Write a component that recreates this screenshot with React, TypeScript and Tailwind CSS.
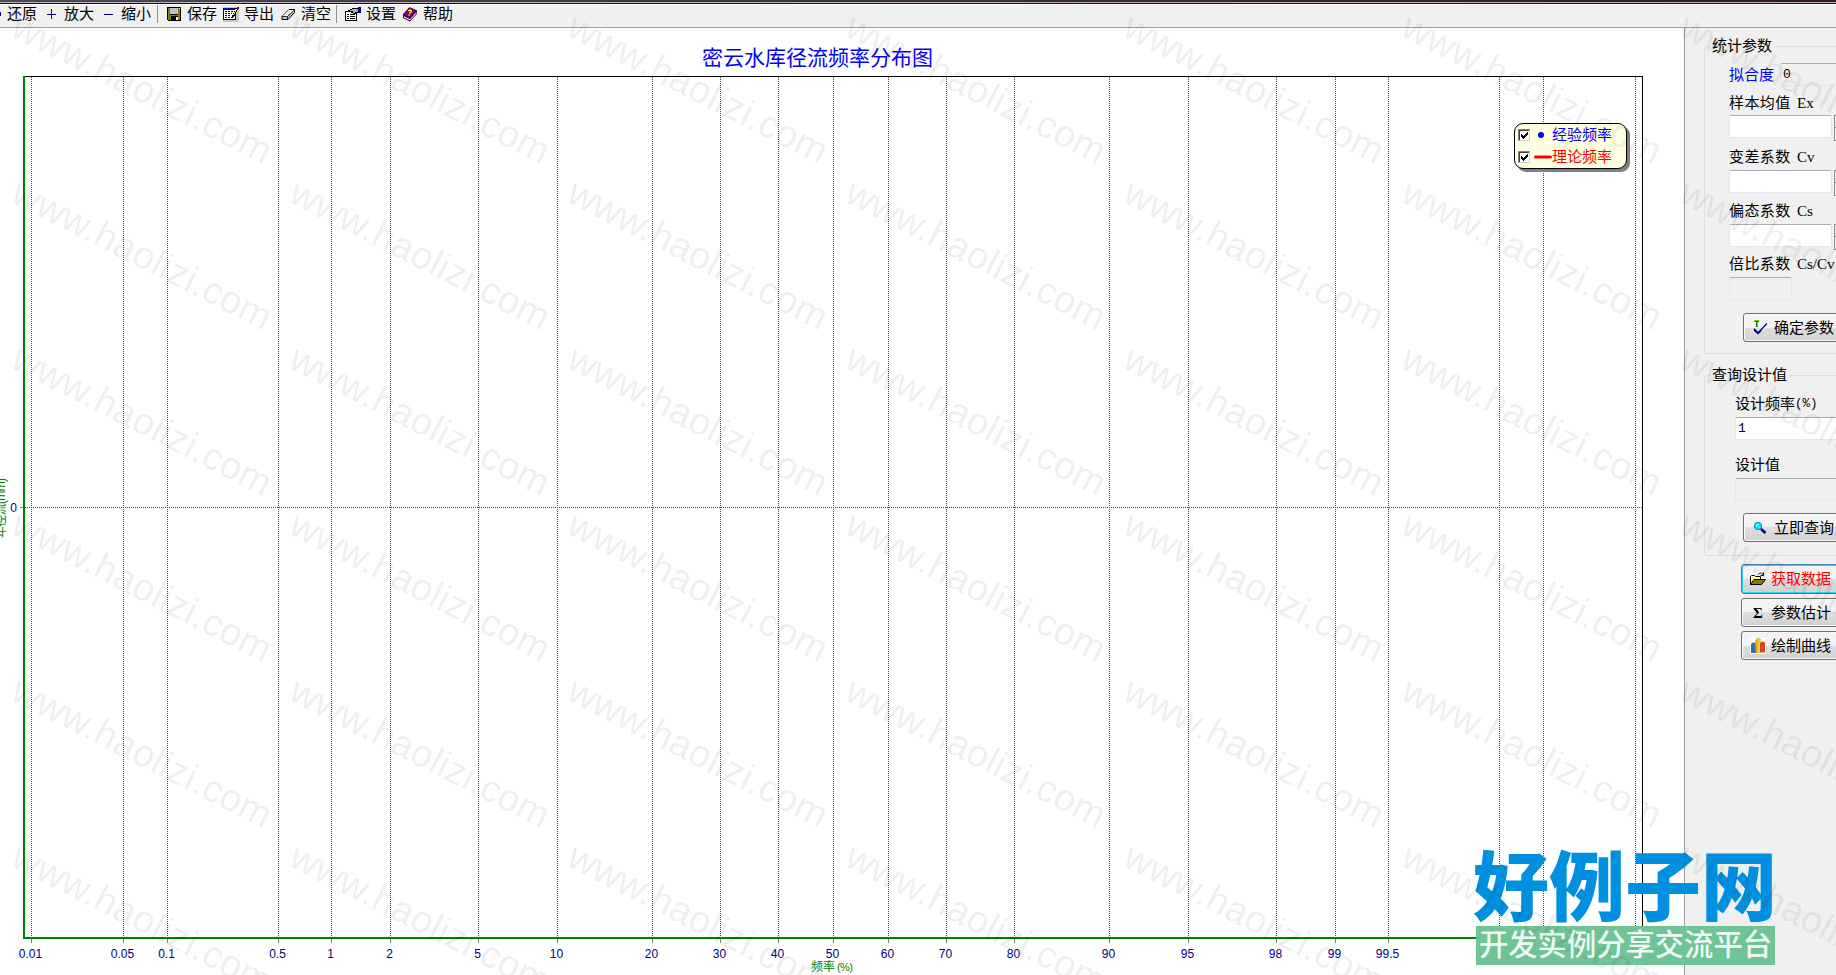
import React from 'react';

interface Tick {
	x: number;
	label?: string;
}

// Probability scale of the x axis
const TICKS: Tick[] = [
	{ x: 31, label: '0.01' },
	{ x: 123, label: '0.05' },
	{ x: 167, label: '0.1' },
	{ x: 278, label: '0.5' },
	{ x: 331, label: '1' },
	{ x: 390, label: '2' },
	{ x: 478, label: '5' },
	{ x: 557, label: '10' },
	{ x: 652, label: '20' },
	{ x: 720, label: '30' },
	{ x: 778, label: '40' },
	{ x: 833, label: '50' },
	{ x: 888, label: '60' },
	{ x: 946, label: '70' },
	{ x: 1014, label: '80' },
	{ x: 1109, label: '90' },
	{ x: 1188, label: '95' },
	{ x: 1276, label: '98' },
	{ x: 1335, label: '99' },
	{ x: 1388, label: '99.5' },
	{ x: 1499 },
	{ x: 1543 },
	{ x: 1635 },
];

const SaveIcon = () => (
	<svg width="15" height="15" viewBox="0 0 15 15" shapeRendering="crispEdges">
		<path d="M0 0h14v14H1L0 13z" fill="#000" />
		<path d="M1 1h2v7h8V1h2v12h-2V9H4v4H1z" fill="#808000" />
		<path d="M3 1h8v6H3z" fill="#c0c0c0" />
		<path d="M9 10h2v3H9z" fill="#fff" />
		<path d="M12 1h1v1h-1z" fill="#fff" />
	</svg>
);

const ExportIcon = () => (
	<svg width="16" height="15" viewBox="0 0 16 15" shapeRendering="crispEdges">
		<path d="M0 0h16v15H0z" fill="#c8c8c8" />
		<path d="M0 1h13v12H0z" fill="#000080" />
		<path d="M1 3h11v9H1z" fill="#fff" />
		<path d="M2 4h2v1H2zM5 4h2v1H5zM8 4h2v1H8zM2 6h2v1H2zM5 6h2v1H5zM8 6h1v1H8zM2 8h2v1H2zM5 8h2v1H5zM2 10h2v1H2zM5 10h2v1H5zM8 10h2v1H8z" fill="#000" />
		<path d="M12 1h3v2h-1v2h-1v2h-1v2h-1v1H9V8h1V6h1V4h1z" fill="#000" />
		<path d="M12 2h2v1h-1v2h-1v2h-1v1h-1V7h1V5h1z" fill="#ffff00" />
		<path d="M14 0h2v2h-2z" fill="#800000" />
	</svg>
);

const EraserIcon = () => (
	<svg width="15" height="13" viewBox="0 0 15 13">
		<path d="M1 8.5L8 1.5h5.5v3L7 11.5H1z" fill="#c0c0c0" stroke="#000" />
		<path d="M1.5 8.5L8 2h5L6.5 8.5z" fill="#fff" />
		<path d="M1 8.5h5.5L13.5 2M6.5 8.5v3" fill="none" stroke="#000" strokeWidth=".8" />
		<path d="M5 7l4-4M7 7l4-4" stroke="#aaa" strokeDasharray="1 1" />
	</svg>
);

const SettingsIcon = () => (
	<svg width="16" height="15" viewBox="0 0 16 15" shapeRendering="crispEdges">
		<path d="M0 4h12v10H0z" fill="#000" />
		<path d="M1 5h10v8H1z" fill="#fff" />
		<path d="M2 7h2v1H2zM5 7h5v1H5zM2 9h2v1H2zM5 9h5v1H5zM2 11h2v1H2zM5 11h5v1H5z" fill="#000" />
		<path d="M3 3h2V2h2V1h7v5h-3v1H9v1H8V6H6V5H3z" fill="#000" />
		<path d="M5 3h2V2h6v3h-3v1H8V4H5z" fill="#b0b0b0" />
		<path d="M13 0h3v6h-3z" fill="#000080" />
	</svg>
);

const HelpIcon = () => (
	<svg width="16" height="15" viewBox="0 0 16 15">
		<path d="M1 8L7 1l8 3v3l-7 7.5L1 11z" fill="#400040" />
		<path d="M1 7.5L7.5 .5l7 3L8 10.8z" fill="#800080" stroke="#300030" strokeWidth=".7" />
		<path d="M2 9.3l6 3 6.5-7v1.2L8 13.3l-6-2.8z" fill="#fff" />
		<path d="M6.5 4.2c.8-1.6 3.4-1.1 2.7.5-.4.9-1.4.9-1.5 2M7.2 7.6v1.2" fill="none" stroke="#ffff00" strokeWidth="1.4" />
	</svg>
);

const ConfirmIcon = () => (
	<svg width="15" height="15" viewBox="0 0 15 15">
		<path d="M1 0h6v2H5v6H3V2H1z" fill="#ffff00" />
		<path d="M1.5 .5h4.5v1.5H4.5V7H3V2H1.5z" fill="#008000" />
		<path d="M1 9l4 4L14 3.5" fill="none" stroke="#000080" strokeWidth="1.2" />
		<path d="M1 8v3l4 3.5 3.5-3.5V9L5 12z" fill="#000080" />
	</svg>
);

const SearchIcon = () => (
	<svg width="14" height="14" viewBox="0 0 14 14">
		<path d="M8 8l4.500 4" stroke="#000080" strokeWidth="2.600" />
		<circle cx="5" cy="5" r="3.600" fill="#00ffff" stroke="#3060a0" strokeWidth="1" />
		<path d="M3 5l2-2" stroke="#fff" />
	</svg>
);

const FolderIcon = () => (
	<svg width="16" height="14" viewBox="0 0 16 14">
		<path d="M.5 12.500V4.500l1-1h3l1 1h5v3" fill="#ffff99" stroke="#000" />
		<path d="M.5 12.500l3.500-5h11.500l-4 5z" fill="#808000" stroke="#000" />
		<path d="M8 2.500c1.500-2 4-2 5.500.5M13.500 .5v3h-3" fill="none" stroke="#000" />
	</svg>
);

const BarsIcon = () => (
	<svg width="16" height="16" viewBox="0 0 16 16">
		<path d="M0 0h16v16H0z" fill="#fff" />
		<path d="M1 6l2-1.500 3 .5v10H1z" fill="#2f6fb8" />
		<path d="M5 2l3-2 3 1v14H6z" fill="#e8b020" />
		<path d="M8 1l3 .5v13.500H8z" fill="#f4c94a" />
		<path d="M10 5l2-1.500 3 1v10H10z" fill="#d8432a" />
	</svg>
);

const ToolLabel = ({ children }: { children: React.ReactNode }) => (
	<span className="text-[15px] leading-5 whitespace-nowrap">{children}</span>
);

const Toolbar = () => (
	<header className="h-7 bg-[#f0f0f0] border-b border-[#a0a0a0] flex flex-col overflow-hidden">
		<div className="h-0.5 shrink-0 bg-linear-to-r from-[#4a4a58] via-[#3c3238] to-[#301c20]" />
		<div className="h-px shrink-0 bg-[#b8b0b6]" />
		<div className="h-px shrink-0 bg-[#1c1418]" />
		<div className="h-px shrink-0 bg-white" />
		<div className="h-[22px] flex items-center pb-1">
			<span className="w-[7px] flex items-center">
				<span className="w-px h-1 bg-[#000080]" />
			</span>
			<ToolLabel>还原</ToolLabel>
			<svg width="27" height="10" viewBox="0 0 27 10" shapeRendering="crispEdges">
				<path d="M10 5h9M14.500 0v10" stroke="#000080" strokeWidth="1" />
			</svg>
			<ToolLabel>放大</ToolLabel>
			<svg width="27" height="10" viewBox="0 0 27 10" shapeRendering="crispEdges">
				<path d="M10 5h9" stroke="#000080" strokeWidth="1" />
			</svg>
			<ToolLabel>缩小</ToolLabel>
			<span className="w-px h-[18px] bg-[#909090] ml-1.5 mr-[9px]" />
			<SaveIcon />
			<span className="w-[5px]" />
			<ToolLabel>保存</ToolLabel>
			<span className="w-[6px]" />
			<ExportIcon />
			<span className="w-[5px]" />
			<ToolLabel>导出</ToolLabel>
			<span className="w-[7px]" />
			<EraserIcon />
			<span className="w-[5px]" />
			<ToolLabel>清空</ToolLabel>
			<span className="w-px h-[18px] bg-[#909090] ml-[5px] mr-2" />
			<SettingsIcon />
			<span className="w-[5px]" />
			<ToolLabel>设置</ToolLabel>
			<span className="w-[6px]" />
			<HelpIcon />
			<span className="w-[5px]" />
			<ToolLabel>帮助</ToolLabel>
		</div>
	</header>
);

const CheckBox = () => (
	<svg width="12" height="12" viewBox="0 0 12 12" shapeRendering="crispEdges">
		<path d="M0 0h12v12H0z" fill="#d8d4cc" />
		<path d="M0 0h12v1H1v11H0z" fill="#808080" />
		<path d="M1 1h10v1H2v9H1z" fill="#404040" />
		<path d="M2 2h9v9H2z" fill="#fff" />
		<path d="M3 5h1v1h1v1h1V6h1V5h1V4h1V3h1v3H9v1H8v1H7v1H6v1H5V9H4V8H3z" fill="#000" />
	</svg>
);

const Legend = () => (
	<div className="absolute left-[1514px] top-[95px] w-[113px] h-[46px] rounded-[9px] border border-black bg-[#ffffe1] shadow-[3px_3px_0_#808080] pl-[3px] text-[15px] leading-[22px]">
		<div className="h-[22px] flex items-center text-[#0000ff]">
			<CheckBox />
			<svg width="22" height="8" viewBox="0 0 22 8">
				<circle cx="11" cy="4" r="3" fill="#0000ff" />
			</svg>
			<span>经验频率</span>
		</div>
		<div className="h-[22px] flex items-center text-[#ff0000]">
			<CheckBox />
			<svg width="22" height="8" viewBox="0 0 22 8">
				<path d="M5.500 4h15" stroke="#ff0000" strokeWidth="3" strokeLinecap="round" />
			</svg>
			<span>理论频率</span>
		</div>
	</div>
);

const Chart = () => (
	<main className="relative w-[1684px] shrink-0 bg-white overflow-hidden">
		<svg width="1684" height="947" viewBox="0 28 1684 947" className="block">
			<text x="817.500" y="65" textAnchor="middle" fontSize="21" textLength="231" fill="#0000ff">
				密云水库径流频率分布图
			</text>
			<g shapeRendering="crispEdges">
				{TICKS.map((tick) => (
					<path key={tick.x} d={`M${tick.x + 0.5} 77V937`} stroke="#008000" strokeDasharray="1 1" />
				))}
				<path d="M25 507.500H1642" stroke="#008000" strokeDasharray="1 1" />
				<path d="M20 507.500h4" stroke="#808080" />
				<path d="M24 76.500H1642.500V937" fill="none" stroke="#000" />
				<path d="M24 76V939M23 938H1643" stroke="#008000" strokeWidth="2" />
				{TICKS.filter((tick) => tick.label).map((tick) => (
					<path key={tick.x} d={`M${tick.x + 0.5} 939v4`} stroke="#808080" />
				))}
			</g>
			<g fontSize="12" fill="#000080" textAnchor="middle">
				{TICKS.filter((tick) => tick.label).map((tick) => (
					<text key={tick.x} x={tick.x - 0.5} y="958">{tick.label}</text>
				))}
				<text x="13.500" y="512">0</text>
			</g>
			<g fill="#008000" fontSize="12">
				<text x="811" y="971">频率</text>
				<text x="837" y="971" fontSize="11" textLength="16">(%)</text>
				<text transform="translate(4.500 538) rotate(-90)" textLength="60">年径流(mm)</text>
			</g>
		</svg>
		<Legend />
	</main>
);

const Field = ({ className = '', children }: { className?: string; children?: React.ReactNode }) => (
	<div className={`h-[23px] border border-[#e2e6ee] border-t-[#abadb3] rounded-[2px] text-[15px] leading-[21px] ${className}`}>
		{children}
	</div>
);

const Spinner = () => (
	<div className="w-4 h-[26px] border border-[#8c8c8c] bg-[#f0f0f0] flex flex-col">
		<div className="h-3 border-b border-[#8c8c8c]" />
	</div>
);

const ParamLabel = ({ name, symbol }: { name: string; symbol: string }) => (
	<div className="h-5 flex items-center text-[15px] leading-5 whitespace-nowrap">
		<span className="w-[68px] tracking-[0.4px]">{name}</span>
		<span className="font-['Liberation_Serif',serif]">{symbol}</span>
	</div>
);

const Button = ({ icon, label, className = '' }: { icon: React.ReactNode; label: string; className?: string }) => (
	<button className={`flex items-center w-[120px] rounded-[3px] border bg-linear-to-b from-[#f3f3f3] from-50% via-[#dfdfdf] via-50% to-[#d0d0d0] text-[15px] leading-5 whitespace-nowrap shadow-[inset_0_0_0_1px_#fafafa] ${className}`}>
		<span className="w-[21px] flex">{icon}</span>
		{label}
	</button>
);

const Sidebar = () => (
	<aside className="flex-1 min-w-0 bg-[#f0f0f0] border-l border-[#a0a0a0] overflow-hidden pl-[19px]">
		<div className="w-[200px]">
			<section className="mt-[18px] h-[308px] border border-[#d5dfe5] rounded-[3px]">
				<h2 className="-mt-[11px] ml-[5px] w-fit px-0.5 bg-[#f0f0f0] text-[15px] leading-5">统计参数</h2>
				<div className="pl-6">
					<div className="mt-[7px] flex items-center">
						<span className="w-[51px] text-[15px] leading-5 text-[#0000ff]">拟合度</span>
						<Field className="w-28 pl-0.5 font-['Liberation_Mono',monospace] !text-[13px]">0</Field>
					</div>
					<div className="mt-[7px]">
						<ParamLabel name="样本均值" symbol="Ex" />
						<div className="mt-0.5 flex gap-0.5">
							<Field className="w-[103px] bg-white" />
							<Spinner />
						</div>
					</div>
					<div className="mt-[6px]">
						<ParamLabel name="变差系数" symbol="Cv" />
						<div className="mt-[3px] flex gap-0.5">
							<Field className="w-[103px] bg-white" />
							<Spinner />
						</div>
					</div>
					<div className="mt-[5px]">
						<ParamLabel name="偏态系数" symbol="Cs" />
						<div className="mt-[3px] flex gap-0.5">
							<Field className="w-[103px] bg-white" />
							<Spinner />
						</div>
					</div>
					<div className="mt-[4px]">
						<ParamLabel name="倍比系数" symbol="Cs/Cv" />
						<Field className="mt-[3px] w-[63px]" />
					</div>
					<Button
						icon={<ConfirmIcon />}
						label="确定参数"
						className="mt-[13px] ml-3.5 pl-[9px] h-[29px] border-[#707070]"
					/>
				</div>
			</section>
			<section className="mt-[21px] h-[181px] border border-[#d5dfe5] rounded-[3px]">
				<h2 className="-mt-[11px] ml-[5px] w-fit px-0.5 bg-[#f0f0f0] text-[15px] leading-5">查询设计值</h2>
				<div className="pl-[30px]">
					<div className="mt-[9px] flex items-center h-5 text-[15px]">
						<span>设计频率</span>
						<span className="font-['Liberation_Mono',monospace] text-[12.5px]">(%)</span>
					</div>
					<Field className="mt-[3px] w-32 bg-white pl-0.5 font-['Liberation_Mono',monospace] !text-[13px]">1</Field>
					<div className="mt-[15px] h-5 text-[15px] leading-5">设计值</div>
					<Field className="mt-[3px] w-32" />
					<Button
						icon={<SearchIcon />}
						label="立即查询"
						className="mt-3 ml-2 pl-[9px] h-[29px] border-[#707070]"
					/>
				</div>
			</section>
			<div className="mt-2 ml-[37px] flex flex-col">
				<Button
					icon={<FolderIcon />}
					label="获取数据"
					className="pl-2 h-[30px] border-[#3c7fb1] !shadow-[inset_0_0_0_1px_#38cdf4] text-[#ff0000]"
				/>
				<Button
					icon={<span className="w-4 text-center font-bold font-['Liberation_Serif',serif]">Σ</span>}
					label="参数估计"
					className="mt-1 pl-2 h-[29px] border-[#707070]"
				/>
				<Button icon={<BarsIcon />} label="绘制曲线" className="mt-1 pl-2 h-[29px] border-[#707070]" />
			</div>
		</div>
	</aside>
);

// Repeating diagonal site mark
const Watermark = () => (
	<svg width="1836" height="975" viewBox="0 0 1836 975" className="absolute inset-0 pointer-events-none">
		<g fontSize="38" fill="#000" fillOpacity=".075">
			{[0, 1, 2, 3, 4, 5].map((row) =>
				[0, 1, 2, 3, 4, 5, 6].map((col) => (
					<text
						key={`${row}-${col}`}
						transform={`translate(${9 + col * 278} ${35 + row * 166}) rotate(27)`}
						textLength="286"
					>
						www.haolizi.com
					</text>
				))
			)}
		</g>
	</svg>
);

const SiteLogo = () => (
	<div className="absolute left-[1476px] top-[846px] w-[299px] pointer-events-none">
		<svg width="305" height="80" viewBox="0 0 305 80" className="block overflow-visible">
			<text x="-3" y="69" fontSize="76" fontWeight="900" textLength="304" fill="#0090df">好例子网</text>
		</svg>
		<div className="h-[39px] bg-[#6fc394] pl-[3px] text-[29.3px] leading-[38px] font-medium text-[#f0faf4] whitespace-nowrap">
			开发实例分享交流平台
		</div>
	</div>
);

export default function App() {
	return (
		<div className="relative w-[1836px] h-[975px] overflow-hidden flex flex-col bg-[#f0f0f0] text-black font-['Liberation_Sans','Noto_Sans_CJK_SC',sans-serif]">
			<Toolbar />
			<div className="flex-1 min-h-0 flex">
				<Chart />
				<Sidebar />
			</div>
			<SiteLogo />
			<Watermark />
		</div>
	);
}
